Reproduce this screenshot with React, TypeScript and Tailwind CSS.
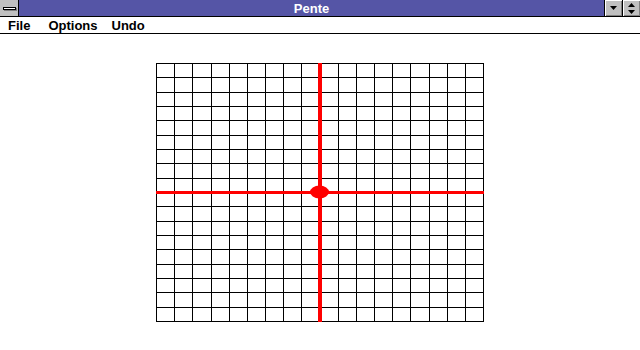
import React from 'react';

const W = 327;
const H = 258;
const N = 18;

function Board() {
  const xs = Array.from({ length: N + 1 }, (_, i) => Math.round((i * W) / N) + 0.5);
  const ys = Array.from({ length: N + 1 }, (_, i) => Math.round((i * H) / N) + 0.5);
  return (
    <svg width={W + 1} height={H + 1} className="block" shapeRendering="crispEdges">
      {xs.map((x) => (
        <line key={'v' + x} x1={x} y1={0} x2={x} y2={H + 1} stroke="#000" strokeWidth={1} />
      ))}
      {ys.map((y) => (
        <line key={'h' + y} x1={0} y1={y} x2={W + 1} y2={y} stroke="#000" strokeWidth={1} />
      ))}
      <rect x={162} y={0} width={4} height={H + 1} fill="#ff0000" />
      <rect x={0} y={128} width={W + 1} height={3} fill="#ff0000" />
      <ellipse cx={163.5} cy={129} rx={9.5} ry={6.5} fill="#ff0000" shapeRendering="auto" />
    </svg>
  );
}

function CaptionButton({ children }: { children: React.ReactNode }) {
  return (
    <div className="w-[18px] h-full border-l border-black bg-[#c0c0c0] flex items-center justify-center shadow-[inset_1px_1px_0_#fff,inset_-1px_-1px_0_#808080]">
      {children}
    </div>
  );
}

export default function App() {
  return (
    <div className="w-[640px] h-[350px] bg-white overflow-hidden" style={{ fontFamily: '"Liberation Sans", Arial, sans-serif' }}>
      <div className="h-[17px] flex bg-[#5555a6] border-b border-black">
        <div className="w-[19px] h-full bg-[#c0c0c0] border-r border-black flex items-center justify-center">
          <div className="w-[13px] h-[3px] bg-white border border-black shadow-[1px_1px_0_#808080]" />
        </div>
        <div className="flex-1 flex items-center justify-center text-white font-bold text-[13px] leading-none">
          Pente
        </div>
        <CaptionButton>
          <svg width="9" height="5" viewBox="0 0 9 5">
            <path d="M1 0h7L4.5 4z" fill="#000" />
          </svg>
        </CaptionButton>
        <CaptionButton>
          <svg width="9" height="11" viewBox="0 0 9 11">
            <path d="M4.5 0L8 4H1z M1 7h7L4.5 11z" fill="#000" />
          </svg>
        </CaptionButton>
      </div>
      <div className="h-[17px] flex items-center border-b border-black text-[13px] font-bold text-black leading-none">
        <span className="ml-[8px]">File</span>
        <span className="ml-[18px]">Options</span>
        <span className="ml-[14px]">Undo</span>
      </div>
      <div className="pl-[156px] pt-[29px]">
        <Board />
      </div>
    </div>
  );
}
